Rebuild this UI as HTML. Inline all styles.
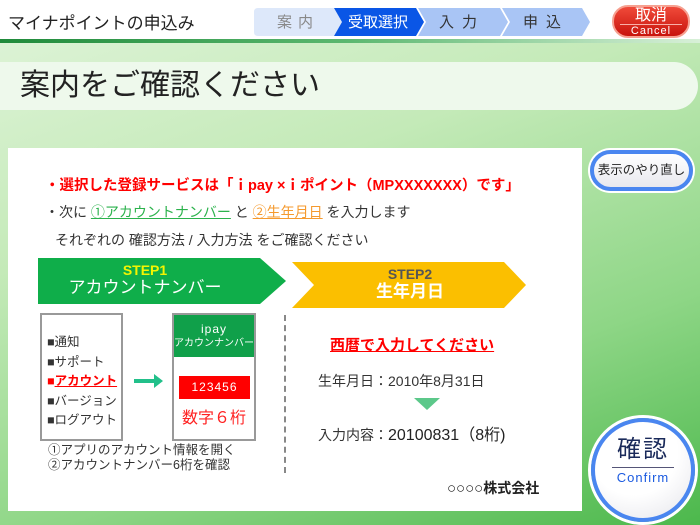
<!DOCTYPE html>
<html><head><meta charset="utf-8"><style>
*{margin:0;padding:0;box-sizing:border-box}
body{width:700px;height:525px;overflow:hidden;position:relative;font-family:"Liberation Sans","Noto Sans CJK JP",sans-serif;
background:linear-gradient(160deg,#e0f4da 0%,#c4eab8 35%,#8ed686 70%,#4cb84c 100%);}
.a{position:absolute}
.hdr{left:0;top:0;width:700px;height:39px;background:#fff}
.gl{left:0;top:39px;width:700px;height:4px;background:linear-gradient(90deg,#1f8a3a,#5cb870 50%,#d8f0d8)}
.nav{top:8px;height:27px;color:#333;font-size:15px;display:flex;align-items:center;justify-content:center}
.cancel{left:612px;top:5px;width:78px;height:33px;border-radius:16px;background:linear-gradient(#f04a3a,#c8140c);border:2px solid #f6a090;color:#fff;text-align:center;font-size:16px;line-height:16px;padding-top:1px}
.title{left:0;top:62px;width:698px;height:48px;border-radius:0 24px 24px 0;background:#eef9ec;font-size:30px;padding-left:20px;line-height:48px;color:#222}
.panel{left:8px;top:148px;width:574px;height:363px;background:#fff}
.t{font-size:14px;color:#333;white-space:nowrap}
</style></head><body>
<div class="a hdr"></div><div class="a gl"></div>
<div class="a" style="left:8px;top:9px;font-size:17px;color:#222">マイナポイントの申込み</div>
<svg class="a" style="left:254px;top:8px" width="336" height="28">
<path d="M4 0H80L88 14L80 28H4Q0 28 0 24V4Q0 0 4 0Z" fill="#dde8fa"/>
<path d="M80 0H162L170 14L162 28H80L88 14Z" fill="#0a56e6"/>
<path d="M164 0H246L254 14L246 28H164L172 14Z" fill="#a9c5f5"/>
<path d="M248 0H328L336 14L328 28H248L256 14Z" fill="#a9c5f5"/>
</svg>
<div class="a nav" style="left:258px;width:80px;color:#888;letter-spacing:6px">案内</div>
<div class="a nav" style="left:338px;width:80px;color:#fff">受取選択</div>
<div class="a nav" style="left:422px;width:80px;letter-spacing:8px">入力</div>
<div class="a nav" style="left:506px;width:80px;letter-spacing:8px">申込</div>
<div class="a cancel">取消<div style="font-size:11px;border-top:1px solid #f8b0a8;margin:0 6px;letter-spacing:1px;line-height:13px">Cancel</div></div>
<div class="a title">案内をご確認ください</div>
<div class="a panel"></div>
<div class="a t" style="left:45px;top:174px;color:#f00;font-weight:bold;font-size:14.5px">・選択した登録サービスは「ｉpay ×ｉポイント（MPXXXXXXX）です」</div>
<div class="a t" style="left:45px;top:202px">・次に <span style="color:#2bb24c;text-decoration:underline">①アカウントナンバー</span> と <span style="color:#f59a2e;text-decoration:underline">②生年月日</span> を入力します</div>
<div class="a t" style="left:55px;top:230px">それぞれの 確認方法 / 入力方法 をご確認ください</div>
<svg class="a" style="left:38px;top:256px" width="490" height="54">
<path d="M0 2H222L248 25L222 48H0Z" fill="#0fae4a"/>
<path d="M254 6H466L488 29L466 52H254L276 29Z" fill="#fbbf00"/>
</svg>
<div class="a" style="left:40px;top:261px;width:210px;text-align:center;color:#fff;font-size:17px;line-height:17px"><b style="color:#f5f500;font-size:14px">STEP1</b><br>アカウントナンバー</div>
<div class="a" style="left:305px;top:265px;width:210px;text-align:center;color:#fff;font-size:17px;line-height:18px;font-weight:bold"><span style="color:#555;font-size:14px">STEP2</span><br>生年月日</div>
<div class="a" style="left:40px;top:313px;width:83px;height:128px;border:2px solid #999"></div>
<div class="a t" style="left:47px;top:333px;font-size:12.5px;line-height:19.5px;color:#333">■通知<br>■サポート<br><span style="color:#f00;font-weight:bold">■<u>アカウント</u></span><br>■バージョン<br>■ログアウト</div>
<svg class="a" style="left:134px;top:373px" width="30" height="16"><path d="M0 6H20V1L29 8L20 15V10H0Z" fill="#22c08a"/></svg>
<div class="a" style="left:172px;top:313px;width:84px;height:128px;border:2px solid #999"></div>
<div class="a" style="left:174px;top:315px;width:80px;height:42px;background:#10a04a;color:#fff;text-align:center;font-size:10px;line-height:13px;padding-top:8px"><span style="font-size:12px;letter-spacing:1px">ipay</span><br>アカウンナンバー</div>
<div class="a" style="left:179px;top:376px;width:71px;height:23px;background:#f00;color:#fff;font-size:12px;text-align:center;line-height:23px;letter-spacing:1px">123456</div>
<div class="a" style="left:182px;top:404px;color:#f22;font-size:16px">数字６桁</div>
<div class="a t" style="left:48px;top:443px;font-size:12.5px;line-height:15px">①アプリのアカウント情報を開く<br>②アカウントナンバー6桁を確認</div>
<div class="a" style="left:284px;top:315px;height:158px;border-left:2px dashed #888"></div>
<div class="a" style="left:330px;top:334px;color:#f00;font-size:15px;font-weight:bold;text-decoration:underline">西暦で入力してください</div>
<div class="a t" style="left:318px;top:371px">生年月日：2010年8月31日</div>
<svg class="a" style="left:414px;top:398px" width="26" height="12"><path d="M0 0H26L13 12Z" fill="#5cc88a"/></svg>
<div class="a t" style="left:318px;top:421px">入力内容：<span style="font-size:16px;color:#222">20100831（8桁)</span></div>
<div class="a t" style="left:447px;top:478px;font-weight:bold;color:#222;font-size:14px"><span style="font-weight:normal;font-size:15px">○○○○</span>株式会社</div>
<div class="a" style="left:590px;top:150px;width:103px;height:41px;border-radius:21px;background:linear-gradient(#fff,#e8e8ee);border:4px solid #4a86f0;box-shadow:0 0 0 2px #fff;font-size:12.5px;text-align:center;line-height:33px;color:#222">表示のやり直し</div>
<div class="a" style="left:591px;top:418px;width:104px;height:104px;border-radius:50%;background:radial-gradient(circle at 40% 30%,#fff 50%,#e4e4ea);border:4px solid #4a86f0;box-shadow:0 0 0 3px #fff;text-align:center;padding-top:14px">
<div style="font-size:24px;color:#1a2a5a;line-height:28px;letter-spacing:2px">確認</div>
<div style="width:62px;margin:3px auto 2px;border-top:1px solid #557"></div>
<div style="font-size:13px;color:#1a5ae0;letter-spacing:1px">Confirm</div></div>
</body></html>
